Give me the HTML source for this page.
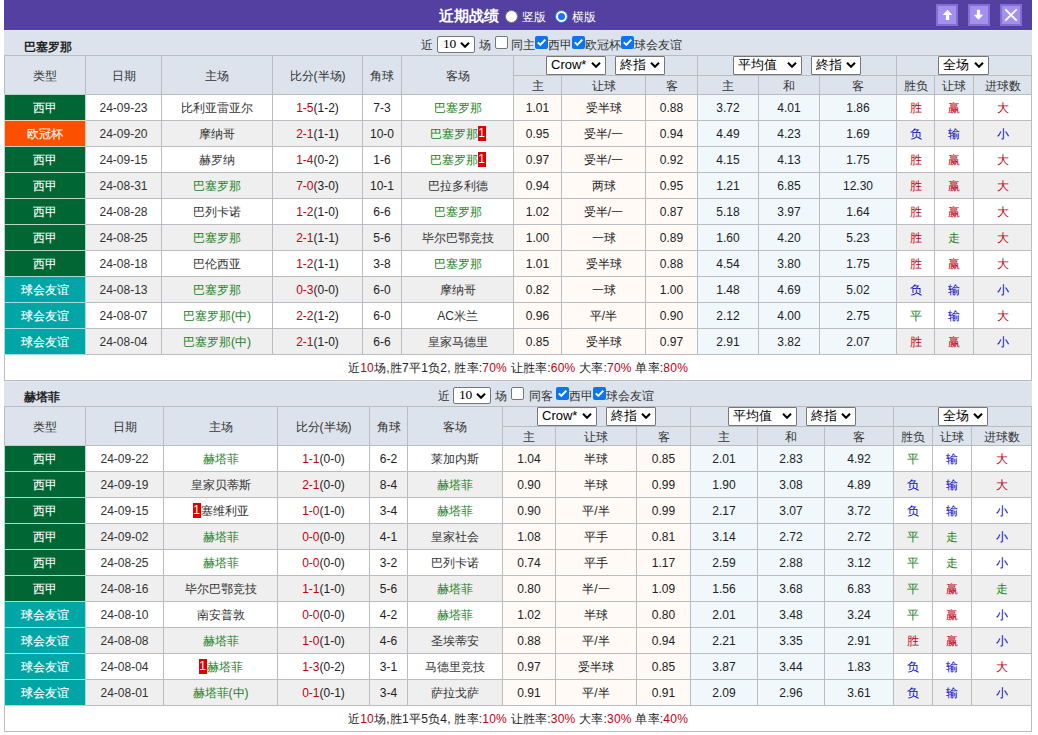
<!DOCTYPE html>
<html><head><meta charset="utf-8"><style>
*{box-sizing:border-box}
html,body{margin:0;padding:0;background:#fff;width:1038px;height:735px;overflow:hidden;font-family:"Liberation Sans", sans-serif;font-size:12px;color:#333}
.top{position:absolute;left:4px;top:0;width:1028px;height:30px;background:#5340a0}
.title{position:absolute;left:439px;top:7px;color:#fff;font-weight:bold;font-size:15px;line-height:18px;white-space:nowrap}
.radio{position:absolute;top:10px;width:13px;height:13px;border-radius:50%;background:#fff;border:1px solid #767676}
.radio.on{border:1px solid #1a73ff;background:#fff}
.radio.on:after{content:"";position:absolute;left:2px;top:2px;width:7px;height:7px;border-radius:50%;background:#1a73ff}
.rl{position:absolute;top:10px;color:#fff;font-size:12px;line-height:15px}
.btn{position:absolute;top:4px;width:22px;height:22px;background:#a291ee;border:2px solid #8170d0}
.bar{position:absolute;left:4px;width:1028px;background:#dce3ed;border-top:1px solid #e4e7f4}
.tname{position:absolute;left:24px;font-weight:bold;font-size:12px;line-height:14px;color:#222}
.grid{position:absolute;background:#b9bcc1}
.k{font-weight:normal}
.c{position:absolute;text-align:center;white-space:nowrap;overflow:hidden;color:#222}
.rc{display:inline-block;background:#e00000;color:#fff;width:8px;height:15px;line-height:15px;font-size:12px;text-align:center;vertical-align:1px;margin:0}
.sel{position:absolute;height:19px;background:#fff;border:1px solid #767676;border-radius:1px;font-size:13px;line-height:16px;color:#000}
.st{position:absolute;left:4px;top:0}
.chev{position:absolute;right:4px;top:5px}
.ft{position:absolute;white-space:nowrap;line-height:14px;font-size:12px;color:#333}
.fsel{position:absolute;background:#fff;border:1px solid #767676;border-radius:2px;color:#000}
.fst{position:absolute;left:6px;top:0px;font-family:"Liberation Serif",serif;font-size:13.5px;line-height:14px;left:5px;letter-spacing:-0.3px}
.ck{position:absolute;width:13px;height:13px;border:1px solid #767676;border-radius:2px;background:#fff}
.ck.on{background:#0a75ee;border:none;border-radius:2px}
.ck svg{position:absolute;left:0;top:0}
</style></head><body>
<div class="top"></div>
<div class="title">近期战绩</div>
<div class="radio" style="left:505px"></div><div class="rl" style="left:522px">竖版</div>
<div class="radio on" style="left:555px"></div><div class="rl" style="left:572px">横版</div>
<div class="btn" style="left:936px"><svg width="18" height="18" viewBox="0 0 18 18"><path d="M9.5 3.8 L14.3 9 L11.2 9 L11.2 14 L7.9 14 L7.9 9 L4.7 9 Z" fill="#fff"/></svg></div>
<div class="btn" style="left:968px"><svg width="18" height="18" viewBox="0 0 18 18"><path d="M8.5 13.8 L13.2 8.7 L10.1 8.7 L10.1 3.8 L6.9 3.8 L6.9 8.7 L3.8 8.7 Z" fill="#fff"/></svg></div>
<div class="btn" style="left:1000px"><svg width="18" height="18" viewBox="0 0 18 18"><path d="M3.3 3.3 L14.7 14.7 M14.7 3.3 L3.3 14.7" stroke="#fff" stroke-width="1.9"/></svg></div>
<div class="bar" style="top:30px;height:25px"></div>
<div class="tname" style="top:40px">巴塞罗那</div>
<div class="grid" style="left:4px;top:55px;width:1028px;height:326px"></div>
<div class="c" style="left:5px;top:56px;width:80px;height:38px;line-height:40px;background:#dce3ed;color:#333"><b class="k">类型</b></div>
<div class="c" style="left:86px;top:56px;width:75px;height:38px;line-height:40px;background:#dce3ed;color:#333"><b class="k">日期</b></div>
<div class="c" style="left:162px;top:56px;width:110px;height:38px;line-height:40px;background:#dce3ed;color:#333"><b class="k">主场</b></div>
<div class="c" style="left:273px;top:56px;width:89px;height:38px;line-height:40px;background:#dce3ed;color:#333"><b class="k">比分</b>(<b class="k">半场</b>)</div>
<div class="c" style="left:363px;top:56px;width:38px;height:38px;line-height:40px;background:#dce3ed;color:#333"><b class="k">角球</b></div>
<div class="c" style="left:402px;top:56px;width:111px;height:38px;line-height:40px;background:#dce3ed;color:#333"><b class="k">客场</b></div>
<div class="c" style="left:514px;top:56px;width:183px;height:19px;line-height:21px;background:#dce3ed;"></div>
<div class="c" style="left:698px;top:56px;width:198px;height:19px;line-height:21px;background:#dce3ed;"></div>
<div class="c" style="left:897px;top:56px;width:134px;height:19px;line-height:21px;background:#dce3ed;"></div>
<div class="c" style="left:514px;top:76px;width:47px;height:18px;line-height:20px;background:#dce3ed;color:#333;line-height:21px"><b class="k">主</b></div>
<div class="c" style="left:562px;top:76px;width:83px;height:18px;line-height:20px;background:#dce3ed;color:#333;line-height:21px"><b class="k">让球</b></div>
<div class="c" style="left:646px;top:76px;width:51px;height:18px;line-height:20px;background:#dce3ed;color:#333;line-height:21px"><b class="k">客</b></div>
<div class="c" style="left:698px;top:76px;width:60px;height:18px;line-height:20px;background:#dce3ed;color:#333;line-height:21px"><b class="k">主</b></div>
<div class="c" style="left:759px;top:76px;width:60px;height:18px;line-height:20px;background:#dce3ed;color:#333;line-height:21px"><b class="k">和</b></div>
<div class="c" style="left:820px;top:76px;width:76px;height:18px;line-height:20px;background:#dce3ed;color:#333;line-height:21px"><b class="k">客</b></div>
<div class="c" style="left:897px;top:76px;width:37px;height:18px;line-height:20px;background:#dce3ed;color:#333;line-height:21px"><b class="k">胜负</b></div>
<div class="c" style="left:935px;top:76px;width:38px;height:18px;line-height:20px;background:#dce3ed;color:#333;line-height:21px"><b class="k">让球</b></div>
<div class="c" style="left:974px;top:76px;width:57px;height:18px;line-height:20px;background:#dce3ed;color:#333;line-height:21px"><b class="k">进球数</b></div>
<div class="c" style="left:4px;top:94px;width:82px;height:27px;background:#b8d4c6"></div>
<div class="c" style="left:5px;top:95px;width:80px;height:25px;line-height:27px;background:#006633;color:#fff;-webkit-text-stroke:0.1px #fff"><b class="k">西甲</b></div>
<div class="c" style="left:86px;top:95px;width:75px;height:25px;line-height:27px;background:#ffffff;color:#333">24-09-23</div>
<div class="c" style="left:162px;top:95px;width:110px;height:25px;line-height:27px;background:#ffffff;"><span style="color:#333333"><b class="k">比利亚雷亚尔</b></span></div>
<div class="c" style="left:273px;top:95px;width:89px;height:25px;line-height:27px;background:#ffffff;"><span style="color:#c00012">1-5</span>(1-2)</div>
<div class="c" style="left:363px;top:95px;width:38px;height:25px;line-height:27px;background:#ffffff;">7-3</div>
<div class="c" style="left:402px;top:95px;width:111px;height:25px;line-height:27px;background:#ffffff;"><span style="color:#1a801a"><b class="k">巴塞罗那</b></span></div>
<div class="c" style="left:514px;top:95px;width:47px;height:25px;line-height:27px;background:#fffaf6;">1.01</div>
<div class="c" style="left:562px;top:95px;width:83px;height:25px;line-height:27px;background:#fffaf6;"><b class="k">受半球</b></div>
<div class="c" style="left:646px;top:95px;width:51px;height:25px;line-height:27px;background:#fffaf6;">0.88</div>
<div class="c" style="left:698px;top:95px;width:60px;height:25px;line-height:27px;background:#f0f8fc;">3.72</div>
<div class="c" style="left:759px;top:95px;width:60px;height:25px;line-height:27px;background:#f0f8fc;">4.01</div>
<div class="c" style="left:820px;top:95px;width:76px;height:25px;line-height:27px;background:#f0f8fc;">1.86</div>
<div class="c" style="left:897px;top:95px;width:37px;height:25px;line-height:27px;background:#ffffff;"><span style="color:#c00012"><b class="k">胜</b></span></div>
<div class="c" style="left:935px;top:95px;width:38px;height:25px;line-height:27px;background:#ffffff;"><span style="color:#c00012"><b class="k">赢</b></span></div>
<div class="c" style="left:974px;top:95px;width:57px;height:25px;line-height:27px;background:#ffffff;"><span style="color:#c00012"><b class="k">大</b></span></div>
<div class="c" style="left:4px;top:120px;width:82px;height:27px;background:#f5d0b0"></div>
<div class="c" style="left:5px;top:121px;width:80px;height:25px;line-height:27px;background:#fa5000;color:#fff;-webkit-text-stroke:0.1px #fff"><b class="k">欧冠杯</b></div>
<div class="c" style="left:86px;top:121px;width:75px;height:25px;line-height:27px;background:#efefef;color:#333">24-09-20</div>
<div class="c" style="left:162px;top:121px;width:110px;height:25px;line-height:27px;background:#efefef;"><span style="color:#333333"><b class="k">摩纳哥</b></span></div>
<div class="c" style="left:273px;top:121px;width:89px;height:25px;line-height:27px;background:#efefef;"><span style="color:#c00012">2-1</span>(1-1)</div>
<div class="c" style="left:363px;top:121px;width:38px;height:25px;line-height:27px;background:#efefef;">10-0</div>
<div class="c" style="left:402px;top:121px;width:111px;height:25px;line-height:27px;background:#efefef;"><span style="color:#1a801a"><b class="k">巴塞罗那</b><span class="rc">1</span></span></div>
<div class="c" style="left:514px;top:121px;width:47px;height:25px;line-height:27px;background:#fffaf6;">0.95</div>
<div class="c" style="left:562px;top:121px;width:83px;height:25px;line-height:27px;background:#fffaf6;"><b class="k">受半</b>/<b class="k">一</b></div>
<div class="c" style="left:646px;top:121px;width:51px;height:25px;line-height:27px;background:#fffaf6;">0.94</div>
<div class="c" style="left:698px;top:121px;width:60px;height:25px;line-height:27px;background:#f0f8fc;">4.49</div>
<div class="c" style="left:759px;top:121px;width:60px;height:25px;line-height:27px;background:#f0f8fc;">4.23</div>
<div class="c" style="left:820px;top:121px;width:76px;height:25px;line-height:27px;background:#f0f8fc;">1.69</div>
<div class="c" style="left:897px;top:121px;width:37px;height:25px;line-height:27px;background:#efefef;"><span style="color:#0000c8"><b class="k">负</b></span></div>
<div class="c" style="left:935px;top:121px;width:38px;height:25px;line-height:27px;background:#efefef;"><span style="color:#0000c8"><b class="k">输</b></span></div>
<div class="c" style="left:974px;top:121px;width:57px;height:25px;line-height:27px;background:#efefef;"><span style="color:#0000c8"><b class="k">小</b></span></div>
<div class="c" style="left:4px;top:146px;width:82px;height:27px;background:#b8d4c6"></div>
<div class="c" style="left:5px;top:147px;width:80px;height:25px;line-height:27px;background:#006633;color:#fff;-webkit-text-stroke:0.1px #fff"><b class="k">西甲</b></div>
<div class="c" style="left:86px;top:147px;width:75px;height:25px;line-height:27px;background:#ffffff;color:#333">24-09-15</div>
<div class="c" style="left:162px;top:147px;width:110px;height:25px;line-height:27px;background:#ffffff;"><span style="color:#333333"><b class="k">赫罗纳</b></span></div>
<div class="c" style="left:273px;top:147px;width:89px;height:25px;line-height:27px;background:#ffffff;"><span style="color:#c00012">1-4</span>(0-2)</div>
<div class="c" style="left:363px;top:147px;width:38px;height:25px;line-height:27px;background:#ffffff;">1-6</div>
<div class="c" style="left:402px;top:147px;width:111px;height:25px;line-height:27px;background:#ffffff;"><span style="color:#1a801a"><b class="k">巴塞罗那</b><span class="rc">1</span></span></div>
<div class="c" style="left:514px;top:147px;width:47px;height:25px;line-height:27px;background:#fffaf6;">0.97</div>
<div class="c" style="left:562px;top:147px;width:83px;height:25px;line-height:27px;background:#fffaf6;"><b class="k">受半</b>/<b class="k">一</b></div>
<div class="c" style="left:646px;top:147px;width:51px;height:25px;line-height:27px;background:#fffaf6;">0.92</div>
<div class="c" style="left:698px;top:147px;width:60px;height:25px;line-height:27px;background:#f0f8fc;">4.15</div>
<div class="c" style="left:759px;top:147px;width:60px;height:25px;line-height:27px;background:#f0f8fc;">4.13</div>
<div class="c" style="left:820px;top:147px;width:76px;height:25px;line-height:27px;background:#f0f8fc;">1.75</div>
<div class="c" style="left:897px;top:147px;width:37px;height:25px;line-height:27px;background:#ffffff;"><span style="color:#c00012"><b class="k">胜</b></span></div>
<div class="c" style="left:935px;top:147px;width:38px;height:25px;line-height:27px;background:#ffffff;"><span style="color:#c00012"><b class="k">赢</b></span></div>
<div class="c" style="left:974px;top:147px;width:57px;height:25px;line-height:27px;background:#ffffff;"><span style="color:#c00012"><b class="k">大</b></span></div>
<div class="c" style="left:4px;top:172px;width:82px;height:27px;background:#b8d4c6"></div>
<div class="c" style="left:5px;top:173px;width:80px;height:25px;line-height:27px;background:#006633;color:#fff;-webkit-text-stroke:0.1px #fff"><b class="k">西甲</b></div>
<div class="c" style="left:86px;top:173px;width:75px;height:25px;line-height:27px;background:#efefef;color:#333">24-08-31</div>
<div class="c" style="left:162px;top:173px;width:110px;height:25px;line-height:27px;background:#efefef;"><span style="color:#1a801a"><b class="k">巴塞罗那</b></span></div>
<div class="c" style="left:273px;top:173px;width:89px;height:25px;line-height:27px;background:#efefef;"><span style="color:#c00012">7-0</span>(3-0)</div>
<div class="c" style="left:363px;top:173px;width:38px;height:25px;line-height:27px;background:#efefef;">10-1</div>
<div class="c" style="left:402px;top:173px;width:111px;height:25px;line-height:27px;background:#efefef;"><span style="color:#333333"><b class="k">巴拉多利德</b></span></div>
<div class="c" style="left:514px;top:173px;width:47px;height:25px;line-height:27px;background:#fffaf6;">0.94</div>
<div class="c" style="left:562px;top:173px;width:83px;height:25px;line-height:27px;background:#fffaf6;"><b class="k">两球</b></div>
<div class="c" style="left:646px;top:173px;width:51px;height:25px;line-height:27px;background:#fffaf6;">0.95</div>
<div class="c" style="left:698px;top:173px;width:60px;height:25px;line-height:27px;background:#f0f8fc;">1.21</div>
<div class="c" style="left:759px;top:173px;width:60px;height:25px;line-height:27px;background:#f0f8fc;">6.85</div>
<div class="c" style="left:820px;top:173px;width:76px;height:25px;line-height:27px;background:#f0f8fc;">12.30</div>
<div class="c" style="left:897px;top:173px;width:37px;height:25px;line-height:27px;background:#efefef;"><span style="color:#c00012"><b class="k">胜</b></span></div>
<div class="c" style="left:935px;top:173px;width:38px;height:25px;line-height:27px;background:#efefef;"><span style="color:#c00012"><b class="k">赢</b></span></div>
<div class="c" style="left:974px;top:173px;width:57px;height:25px;line-height:27px;background:#efefef;"><span style="color:#c00012"><b class="k">大</b></span></div>
<div class="c" style="left:4px;top:198px;width:82px;height:27px;background:#b8d4c6"></div>
<div class="c" style="left:5px;top:199px;width:80px;height:25px;line-height:27px;background:#006633;color:#fff;-webkit-text-stroke:0.1px #fff"><b class="k">西甲</b></div>
<div class="c" style="left:86px;top:199px;width:75px;height:25px;line-height:27px;background:#ffffff;color:#333">24-08-28</div>
<div class="c" style="left:162px;top:199px;width:110px;height:25px;line-height:27px;background:#ffffff;"><span style="color:#333333"><b class="k">巴列卡诺</b></span></div>
<div class="c" style="left:273px;top:199px;width:89px;height:25px;line-height:27px;background:#ffffff;"><span style="color:#c00012">1-2</span>(1-0)</div>
<div class="c" style="left:363px;top:199px;width:38px;height:25px;line-height:27px;background:#ffffff;">6-6</div>
<div class="c" style="left:402px;top:199px;width:111px;height:25px;line-height:27px;background:#ffffff;"><span style="color:#1a801a"><b class="k">巴塞罗那</b></span></div>
<div class="c" style="left:514px;top:199px;width:47px;height:25px;line-height:27px;background:#fffaf6;">1.02</div>
<div class="c" style="left:562px;top:199px;width:83px;height:25px;line-height:27px;background:#fffaf6;"><b class="k">受半</b>/<b class="k">一</b></div>
<div class="c" style="left:646px;top:199px;width:51px;height:25px;line-height:27px;background:#fffaf6;">0.87</div>
<div class="c" style="left:698px;top:199px;width:60px;height:25px;line-height:27px;background:#f0f8fc;">5.18</div>
<div class="c" style="left:759px;top:199px;width:60px;height:25px;line-height:27px;background:#f0f8fc;">3.97</div>
<div class="c" style="left:820px;top:199px;width:76px;height:25px;line-height:27px;background:#f0f8fc;">1.64</div>
<div class="c" style="left:897px;top:199px;width:37px;height:25px;line-height:27px;background:#ffffff;"><span style="color:#c00012"><b class="k">胜</b></span></div>
<div class="c" style="left:935px;top:199px;width:38px;height:25px;line-height:27px;background:#ffffff;"><span style="color:#c00012"><b class="k">赢</b></span></div>
<div class="c" style="left:974px;top:199px;width:57px;height:25px;line-height:27px;background:#ffffff;"><span style="color:#c00012"><b class="k">大</b></span></div>
<div class="c" style="left:4px;top:224px;width:82px;height:27px;background:#b8d4c6"></div>
<div class="c" style="left:5px;top:225px;width:80px;height:25px;line-height:27px;background:#006633;color:#fff;-webkit-text-stroke:0.1px #fff"><b class="k">西甲</b></div>
<div class="c" style="left:86px;top:225px;width:75px;height:25px;line-height:27px;background:#efefef;color:#333">24-08-25</div>
<div class="c" style="left:162px;top:225px;width:110px;height:25px;line-height:27px;background:#efefef;"><span style="color:#1a801a"><b class="k">巴塞罗那</b></span></div>
<div class="c" style="left:273px;top:225px;width:89px;height:25px;line-height:27px;background:#efefef;"><span style="color:#c00012">2-1</span>(1-1)</div>
<div class="c" style="left:363px;top:225px;width:38px;height:25px;line-height:27px;background:#efefef;">5-6</div>
<div class="c" style="left:402px;top:225px;width:111px;height:25px;line-height:27px;background:#efefef;"><span style="color:#333333"><b class="k">毕尔巴鄂竞技</b></span></div>
<div class="c" style="left:514px;top:225px;width:47px;height:25px;line-height:27px;background:#fffaf6;">1.00</div>
<div class="c" style="left:562px;top:225px;width:83px;height:25px;line-height:27px;background:#fffaf6;"><b class="k">一球</b></div>
<div class="c" style="left:646px;top:225px;width:51px;height:25px;line-height:27px;background:#fffaf6;">0.89</div>
<div class="c" style="left:698px;top:225px;width:60px;height:25px;line-height:27px;background:#f0f8fc;">1.60</div>
<div class="c" style="left:759px;top:225px;width:60px;height:25px;line-height:27px;background:#f0f8fc;">4.20</div>
<div class="c" style="left:820px;top:225px;width:76px;height:25px;line-height:27px;background:#f0f8fc;">5.23</div>
<div class="c" style="left:897px;top:225px;width:37px;height:25px;line-height:27px;background:#efefef;"><span style="color:#c00012"><b class="k">胜</b></span></div>
<div class="c" style="left:935px;top:225px;width:38px;height:25px;line-height:27px;background:#efefef;"><span style="color:#1a801a"><b class="k">走</b></span></div>
<div class="c" style="left:974px;top:225px;width:57px;height:25px;line-height:27px;background:#efefef;"><span style="color:#c00012"><b class="k">大</b></span></div>
<div class="c" style="left:4px;top:250px;width:82px;height:27px;background:#b8d4c6"></div>
<div class="c" style="left:5px;top:251px;width:80px;height:25px;line-height:27px;background:#006633;color:#fff;-webkit-text-stroke:0.1px #fff"><b class="k">西甲</b></div>
<div class="c" style="left:86px;top:251px;width:75px;height:25px;line-height:27px;background:#ffffff;color:#333">24-08-18</div>
<div class="c" style="left:162px;top:251px;width:110px;height:25px;line-height:27px;background:#ffffff;"><span style="color:#333333"><b class="k">巴伦西亚</b></span></div>
<div class="c" style="left:273px;top:251px;width:89px;height:25px;line-height:27px;background:#ffffff;"><span style="color:#c00012">1-2</span>(1-1)</div>
<div class="c" style="left:363px;top:251px;width:38px;height:25px;line-height:27px;background:#ffffff;">3-8</div>
<div class="c" style="left:402px;top:251px;width:111px;height:25px;line-height:27px;background:#ffffff;"><span style="color:#1a801a"><b class="k">巴塞罗那</b></span></div>
<div class="c" style="left:514px;top:251px;width:47px;height:25px;line-height:27px;background:#fffaf6;">1.01</div>
<div class="c" style="left:562px;top:251px;width:83px;height:25px;line-height:27px;background:#fffaf6;"><b class="k">受半球</b></div>
<div class="c" style="left:646px;top:251px;width:51px;height:25px;line-height:27px;background:#fffaf6;">0.88</div>
<div class="c" style="left:698px;top:251px;width:60px;height:25px;line-height:27px;background:#f0f8fc;">4.54</div>
<div class="c" style="left:759px;top:251px;width:60px;height:25px;line-height:27px;background:#f0f8fc;">3.80</div>
<div class="c" style="left:820px;top:251px;width:76px;height:25px;line-height:27px;background:#f0f8fc;">1.75</div>
<div class="c" style="left:897px;top:251px;width:37px;height:25px;line-height:27px;background:#ffffff;"><span style="color:#c00012"><b class="k">胜</b></span></div>
<div class="c" style="left:935px;top:251px;width:38px;height:25px;line-height:27px;background:#ffffff;"><span style="color:#c00012"><b class="k">赢</b></span></div>
<div class="c" style="left:974px;top:251px;width:57px;height:25px;line-height:27px;background:#ffffff;"><span style="color:#c00012"><b class="k">大</b></span></div>
<div class="c" style="left:4px;top:276px;width:82px;height:27px;background:#a8dcdc"></div>
<div class="c" style="left:5px;top:277px;width:80px;height:25px;line-height:27px;background:#00a6a6;color:#fff;-webkit-text-stroke:0.1px #fff"><b class="k">球会友谊</b></div>
<div class="c" style="left:86px;top:277px;width:75px;height:25px;line-height:27px;background:#efefef;color:#333">24-08-13</div>
<div class="c" style="left:162px;top:277px;width:110px;height:25px;line-height:27px;background:#efefef;"><span style="color:#1a801a"><b class="k">巴塞罗那</b></span></div>
<div class="c" style="left:273px;top:277px;width:89px;height:25px;line-height:27px;background:#efefef;"><span style="color:#c00012">0-3</span>(0-0)</div>
<div class="c" style="left:363px;top:277px;width:38px;height:25px;line-height:27px;background:#efefef;">6-0</div>
<div class="c" style="left:402px;top:277px;width:111px;height:25px;line-height:27px;background:#efefef;"><span style="color:#333333"><b class="k">摩纳哥</b></span></div>
<div class="c" style="left:514px;top:277px;width:47px;height:25px;line-height:27px;background:#fffaf6;">0.82</div>
<div class="c" style="left:562px;top:277px;width:83px;height:25px;line-height:27px;background:#fffaf6;"><b class="k">一球</b></div>
<div class="c" style="left:646px;top:277px;width:51px;height:25px;line-height:27px;background:#fffaf6;">1.00</div>
<div class="c" style="left:698px;top:277px;width:60px;height:25px;line-height:27px;background:#f0f8fc;">1.48</div>
<div class="c" style="left:759px;top:277px;width:60px;height:25px;line-height:27px;background:#f0f8fc;">4.69</div>
<div class="c" style="left:820px;top:277px;width:76px;height:25px;line-height:27px;background:#f0f8fc;">5.02</div>
<div class="c" style="left:897px;top:277px;width:37px;height:25px;line-height:27px;background:#efefef;"><span style="color:#0000c8"><b class="k">负</b></span></div>
<div class="c" style="left:935px;top:277px;width:38px;height:25px;line-height:27px;background:#efefef;"><span style="color:#0000c8"><b class="k">输</b></span></div>
<div class="c" style="left:974px;top:277px;width:57px;height:25px;line-height:27px;background:#efefef;"><span style="color:#0000c8"><b class="k">小</b></span></div>
<div class="c" style="left:4px;top:302px;width:82px;height:27px;background:#a8dcdc"></div>
<div class="c" style="left:5px;top:303px;width:80px;height:25px;line-height:27px;background:#00a6a6;color:#fff;-webkit-text-stroke:0.1px #fff"><b class="k">球会友谊</b></div>
<div class="c" style="left:86px;top:303px;width:75px;height:25px;line-height:27px;background:#ffffff;color:#333">24-08-07</div>
<div class="c" style="left:162px;top:303px;width:110px;height:25px;line-height:27px;background:#ffffff;"><span style="color:#1a801a"><b class="k">巴塞罗那</b>(<b class="k">中</b>)</span></div>
<div class="c" style="left:273px;top:303px;width:89px;height:25px;line-height:27px;background:#ffffff;"><span style="color:#c00012">2-2</span>(1-2)</div>
<div class="c" style="left:363px;top:303px;width:38px;height:25px;line-height:27px;background:#ffffff;">6-0</div>
<div class="c" style="left:402px;top:303px;width:111px;height:25px;line-height:27px;background:#ffffff;"><span style="color:#333333">AC<b class="k">米兰</b></span></div>
<div class="c" style="left:514px;top:303px;width:47px;height:25px;line-height:27px;background:#fffaf6;">0.96</div>
<div class="c" style="left:562px;top:303px;width:83px;height:25px;line-height:27px;background:#fffaf6;"><b class="k">平</b>/<b class="k">半</b></div>
<div class="c" style="left:646px;top:303px;width:51px;height:25px;line-height:27px;background:#fffaf6;">0.90</div>
<div class="c" style="left:698px;top:303px;width:60px;height:25px;line-height:27px;background:#f0f8fc;">2.12</div>
<div class="c" style="left:759px;top:303px;width:60px;height:25px;line-height:27px;background:#f0f8fc;">4.00</div>
<div class="c" style="left:820px;top:303px;width:76px;height:25px;line-height:27px;background:#f0f8fc;">2.75</div>
<div class="c" style="left:897px;top:303px;width:37px;height:25px;line-height:27px;background:#ffffff;"><span style="color:#1a801a"><b class="k">平</b></span></div>
<div class="c" style="left:935px;top:303px;width:38px;height:25px;line-height:27px;background:#ffffff;"><span style="color:#0000c8"><b class="k">输</b></span></div>
<div class="c" style="left:974px;top:303px;width:57px;height:25px;line-height:27px;background:#ffffff;"><span style="color:#c00012"><b class="k">大</b></span></div>
<div class="c" style="left:4px;top:328px;width:82px;height:27px;background:#a8dcdc"></div>
<div class="c" style="left:5px;top:329px;width:80px;height:25px;line-height:27px;background:#00a6a6;color:#fff;-webkit-text-stroke:0.1px #fff"><b class="k">球会友谊</b></div>
<div class="c" style="left:86px;top:329px;width:75px;height:25px;line-height:27px;background:#efefef;color:#333">24-08-04</div>
<div class="c" style="left:162px;top:329px;width:110px;height:25px;line-height:27px;background:#efefef;"><span style="color:#1a801a"><b class="k">巴塞罗那</b>(<b class="k">中</b>)</span></div>
<div class="c" style="left:273px;top:329px;width:89px;height:25px;line-height:27px;background:#efefef;"><span style="color:#c00012">2-1</span>(1-0)</div>
<div class="c" style="left:363px;top:329px;width:38px;height:25px;line-height:27px;background:#efefef;">6-6</div>
<div class="c" style="left:402px;top:329px;width:111px;height:25px;line-height:27px;background:#efefef;"><span style="color:#333333"><b class="k">皇家马德里</b></span></div>
<div class="c" style="left:514px;top:329px;width:47px;height:25px;line-height:27px;background:#fffaf6;">0.85</div>
<div class="c" style="left:562px;top:329px;width:83px;height:25px;line-height:27px;background:#fffaf6;"><b class="k">受半球</b></div>
<div class="c" style="left:646px;top:329px;width:51px;height:25px;line-height:27px;background:#fffaf6;">0.97</div>
<div class="c" style="left:698px;top:329px;width:60px;height:25px;line-height:27px;background:#f0f8fc;">2.91</div>
<div class="c" style="left:759px;top:329px;width:60px;height:25px;line-height:27px;background:#f0f8fc;">3.82</div>
<div class="c" style="left:820px;top:329px;width:76px;height:25px;line-height:27px;background:#f0f8fc;">2.07</div>
<div class="c" style="left:897px;top:329px;width:37px;height:25px;line-height:27px;background:#efefef;"><span style="color:#c00012"><b class="k">胜</b></span></div>
<div class="c" style="left:935px;top:329px;width:38px;height:25px;line-height:27px;background:#efefef;"><span style="color:#c00012"><b class="k">赢</b></span></div>
<div class="c" style="left:974px;top:329px;width:57px;height:25px;line-height:27px;background:#efefef;"><span style="color:#0000c8"><b class="k">小</b></span></div>
<div class="c" style="left:5px;top:355px;width:1026px;height:25px;line-height:27px;background:#fff;letter-spacing:0.22px"><b class="k">近</b><span style="color:#c00012">10</span><b class="k">场</b>,<b class="k">胜</b>7<b class="k">平</b>1<b class="k">负</b>2, <b class="k">胜率</b>:<span style="color:#c00012">70%</span> <b class="k">让胜率</b>:<span style="color:#c00012">60%</span> <b class="k">大率</b>:<span style="color:#c00012">70%</span> <b class="k">单率</b>:<span style="color:#c00012">80%</span></div>
<div class="bar" style="top:381px;height:25px"></div>
<div class="tname" style="top:390px">赫塔菲</div>
<div class="grid" style="left:4px;top:406px;width:1028px;height:326px"></div>
<div class="c" style="left:5px;top:407px;width:80px;height:38px;line-height:40px;background:#dce3ed;color:#333"><b class="k">类型</b></div>
<div class="c" style="left:86px;top:407px;width:77px;height:38px;line-height:40px;background:#dce3ed;color:#333"><b class="k">日期</b></div>
<div class="c" style="left:164px;top:407px;width:113px;height:38px;line-height:40px;background:#dce3ed;color:#333"><b class="k">主场</b></div>
<div class="c" style="left:278px;top:407px;width:91px;height:38px;line-height:40px;background:#dce3ed;color:#333"><b class="k">比分</b>(<b class="k">半场</b>)</div>
<div class="c" style="left:370px;top:407px;width:37px;height:38px;line-height:40px;background:#dce3ed;color:#333"><b class="k">角球</b></div>
<div class="c" style="left:408px;top:407px;width:94px;height:38px;line-height:40px;background:#dce3ed;color:#333"><b class="k">客场</b></div>
<div class="c" style="left:503px;top:407px;width:187px;height:19px;line-height:21px;background:#dce3ed;"></div>
<div class="c" style="left:691px;top:407px;width:202px;height:19px;line-height:21px;background:#dce3ed;"></div>
<div class="c" style="left:894px;top:407px;width:137px;height:19px;line-height:21px;background:#dce3ed;"></div>
<div class="c" style="left:503px;top:427px;width:52px;height:18px;line-height:20px;background:#dce3ed;color:#333;line-height:21px"><b class="k">主</b></div>
<div class="c" style="left:556px;top:427px;width:80px;height:18px;line-height:20px;background:#dce3ed;color:#333;line-height:21px"><b class="k">让球</b></div>
<div class="c" style="left:637px;top:427px;width:53px;height:18px;line-height:20px;background:#dce3ed;color:#333;line-height:21px"><b class="k">客</b></div>
<div class="c" style="left:691px;top:427px;width:66px;height:18px;line-height:20px;background:#dce3ed;color:#333;line-height:21px"><b class="k">主</b></div>
<div class="c" style="left:758px;top:427px;width:66px;height:18px;line-height:20px;background:#dce3ed;color:#333;line-height:21px"><b class="k">和</b></div>
<div class="c" style="left:825px;top:427px;width:68px;height:18px;line-height:20px;background:#dce3ed;color:#333;line-height:21px"><b class="k">客</b></div>
<div class="c" style="left:894px;top:427px;width:38px;height:18px;line-height:20px;background:#dce3ed;color:#333;line-height:21px"><b class="k">胜负</b></div>
<div class="c" style="left:933px;top:427px;width:38px;height:18px;line-height:20px;background:#dce3ed;color:#333;line-height:21px"><b class="k">让球</b></div>
<div class="c" style="left:972px;top:427px;width:59px;height:18px;line-height:20px;background:#dce3ed;color:#333;line-height:21px"><b class="k">进球数</b></div>
<div class="c" style="left:4px;top:445px;width:82px;height:27px;background:#b8d4c6"></div>
<div class="c" style="left:5px;top:446px;width:80px;height:25px;line-height:27px;background:#006633;color:#fff;-webkit-text-stroke:0.1px #fff"><b class="k">西甲</b></div>
<div class="c" style="left:86px;top:446px;width:77px;height:25px;line-height:27px;background:#ffffff;color:#333">24-09-22</div>
<div class="c" style="left:164px;top:446px;width:113px;height:25px;line-height:27px;background:#ffffff;"><span style="color:#1a801a"><b class="k">赫塔菲</b></span></div>
<div class="c" style="left:278px;top:446px;width:91px;height:25px;line-height:27px;background:#ffffff;"><span style="color:#c00012">1-1</span>(0-0)</div>
<div class="c" style="left:370px;top:446px;width:37px;height:25px;line-height:27px;background:#ffffff;">6-2</div>
<div class="c" style="left:408px;top:446px;width:94px;height:25px;line-height:27px;background:#ffffff;"><span style="color:#333333"><b class="k">莱加内斯</b></span></div>
<div class="c" style="left:503px;top:446px;width:52px;height:25px;line-height:27px;background:#fffaf6;">1.04</div>
<div class="c" style="left:556px;top:446px;width:80px;height:25px;line-height:27px;background:#fffaf6;"><b class="k">半球</b></div>
<div class="c" style="left:637px;top:446px;width:53px;height:25px;line-height:27px;background:#fffaf6;">0.85</div>
<div class="c" style="left:691px;top:446px;width:66px;height:25px;line-height:27px;background:#f0f8fc;">2.01</div>
<div class="c" style="left:758px;top:446px;width:66px;height:25px;line-height:27px;background:#f0f8fc;">2.83</div>
<div class="c" style="left:825px;top:446px;width:68px;height:25px;line-height:27px;background:#f0f8fc;">4.92</div>
<div class="c" style="left:894px;top:446px;width:38px;height:25px;line-height:27px;background:#ffffff;"><span style="color:#1a801a"><b class="k">平</b></span></div>
<div class="c" style="left:933px;top:446px;width:38px;height:25px;line-height:27px;background:#ffffff;"><span style="color:#0000c8"><b class="k">输</b></span></div>
<div class="c" style="left:972px;top:446px;width:59px;height:25px;line-height:27px;background:#ffffff;"><span style="color:#c00012"><b class="k">大</b></span></div>
<div class="c" style="left:4px;top:471px;width:82px;height:27px;background:#b8d4c6"></div>
<div class="c" style="left:5px;top:472px;width:80px;height:25px;line-height:27px;background:#006633;color:#fff;-webkit-text-stroke:0.1px #fff"><b class="k">西甲</b></div>
<div class="c" style="left:86px;top:472px;width:77px;height:25px;line-height:27px;background:#efefef;color:#333">24-09-19</div>
<div class="c" style="left:164px;top:472px;width:113px;height:25px;line-height:27px;background:#efefef;"><span style="color:#333333"><b class="k">皇家贝蒂斯</b></span></div>
<div class="c" style="left:278px;top:472px;width:91px;height:25px;line-height:27px;background:#efefef;"><span style="color:#c00012">2-1</span>(0-0)</div>
<div class="c" style="left:370px;top:472px;width:37px;height:25px;line-height:27px;background:#efefef;">8-4</div>
<div class="c" style="left:408px;top:472px;width:94px;height:25px;line-height:27px;background:#efefef;"><span style="color:#1a801a"><b class="k">赫塔菲</b></span></div>
<div class="c" style="left:503px;top:472px;width:52px;height:25px;line-height:27px;background:#fffaf6;">0.90</div>
<div class="c" style="left:556px;top:472px;width:80px;height:25px;line-height:27px;background:#fffaf6;"><b class="k">半球</b></div>
<div class="c" style="left:637px;top:472px;width:53px;height:25px;line-height:27px;background:#fffaf6;">0.99</div>
<div class="c" style="left:691px;top:472px;width:66px;height:25px;line-height:27px;background:#f0f8fc;">1.90</div>
<div class="c" style="left:758px;top:472px;width:66px;height:25px;line-height:27px;background:#f0f8fc;">3.08</div>
<div class="c" style="left:825px;top:472px;width:68px;height:25px;line-height:27px;background:#f0f8fc;">4.89</div>
<div class="c" style="left:894px;top:472px;width:38px;height:25px;line-height:27px;background:#efefef;"><span style="color:#0000c8"><b class="k">负</b></span></div>
<div class="c" style="left:933px;top:472px;width:38px;height:25px;line-height:27px;background:#efefef;"><span style="color:#0000c8"><b class="k">输</b></span></div>
<div class="c" style="left:972px;top:472px;width:59px;height:25px;line-height:27px;background:#efefef;"><span style="color:#c00012"><b class="k">大</b></span></div>
<div class="c" style="left:4px;top:497px;width:82px;height:27px;background:#b8d4c6"></div>
<div class="c" style="left:5px;top:498px;width:80px;height:25px;line-height:27px;background:#006633;color:#fff;-webkit-text-stroke:0.1px #fff"><b class="k">西甲</b></div>
<div class="c" style="left:86px;top:498px;width:77px;height:25px;line-height:27px;background:#ffffff;color:#333">24-09-15</div>
<div class="c" style="left:164px;top:498px;width:113px;height:25px;line-height:27px;background:#ffffff;"><span style="color:#333333"><span class="rc">1</span><b class="k">塞维利亚</b></span></div>
<div class="c" style="left:278px;top:498px;width:91px;height:25px;line-height:27px;background:#ffffff;"><span style="color:#c00012">1-0</span>(1-0)</div>
<div class="c" style="left:370px;top:498px;width:37px;height:25px;line-height:27px;background:#ffffff;">3-4</div>
<div class="c" style="left:408px;top:498px;width:94px;height:25px;line-height:27px;background:#ffffff;"><span style="color:#1a801a"><b class="k">赫塔菲</b></span></div>
<div class="c" style="left:503px;top:498px;width:52px;height:25px;line-height:27px;background:#fffaf6;">0.90</div>
<div class="c" style="left:556px;top:498px;width:80px;height:25px;line-height:27px;background:#fffaf6;"><b class="k">平</b>/<b class="k">半</b></div>
<div class="c" style="left:637px;top:498px;width:53px;height:25px;line-height:27px;background:#fffaf6;">0.99</div>
<div class="c" style="left:691px;top:498px;width:66px;height:25px;line-height:27px;background:#f0f8fc;">2.17</div>
<div class="c" style="left:758px;top:498px;width:66px;height:25px;line-height:27px;background:#f0f8fc;">3.07</div>
<div class="c" style="left:825px;top:498px;width:68px;height:25px;line-height:27px;background:#f0f8fc;">3.72</div>
<div class="c" style="left:894px;top:498px;width:38px;height:25px;line-height:27px;background:#ffffff;"><span style="color:#0000c8"><b class="k">负</b></span></div>
<div class="c" style="left:933px;top:498px;width:38px;height:25px;line-height:27px;background:#ffffff;"><span style="color:#0000c8"><b class="k">输</b></span></div>
<div class="c" style="left:972px;top:498px;width:59px;height:25px;line-height:27px;background:#ffffff;"><span style="color:#0000c8"><b class="k">小</b></span></div>
<div class="c" style="left:4px;top:523px;width:82px;height:27px;background:#b8d4c6"></div>
<div class="c" style="left:5px;top:524px;width:80px;height:25px;line-height:27px;background:#006633;color:#fff;-webkit-text-stroke:0.1px #fff"><b class="k">西甲</b></div>
<div class="c" style="left:86px;top:524px;width:77px;height:25px;line-height:27px;background:#efefef;color:#333">24-09-02</div>
<div class="c" style="left:164px;top:524px;width:113px;height:25px;line-height:27px;background:#efefef;"><span style="color:#1a801a"><b class="k">赫塔菲</b></span></div>
<div class="c" style="left:278px;top:524px;width:91px;height:25px;line-height:27px;background:#efefef;"><span style="color:#c00012">0-0</span>(0-0)</div>
<div class="c" style="left:370px;top:524px;width:37px;height:25px;line-height:27px;background:#efefef;">4-1</div>
<div class="c" style="left:408px;top:524px;width:94px;height:25px;line-height:27px;background:#efefef;"><span style="color:#333333"><b class="k">皇家社会</b></span></div>
<div class="c" style="left:503px;top:524px;width:52px;height:25px;line-height:27px;background:#fffaf6;">1.08</div>
<div class="c" style="left:556px;top:524px;width:80px;height:25px;line-height:27px;background:#fffaf6;"><b class="k">平手</b></div>
<div class="c" style="left:637px;top:524px;width:53px;height:25px;line-height:27px;background:#fffaf6;">0.81</div>
<div class="c" style="left:691px;top:524px;width:66px;height:25px;line-height:27px;background:#f0f8fc;">3.14</div>
<div class="c" style="left:758px;top:524px;width:66px;height:25px;line-height:27px;background:#f0f8fc;">2.72</div>
<div class="c" style="left:825px;top:524px;width:68px;height:25px;line-height:27px;background:#f0f8fc;">2.72</div>
<div class="c" style="left:894px;top:524px;width:38px;height:25px;line-height:27px;background:#efefef;"><span style="color:#1a801a"><b class="k">平</b></span></div>
<div class="c" style="left:933px;top:524px;width:38px;height:25px;line-height:27px;background:#efefef;"><span style="color:#1a801a"><b class="k">走</b></span></div>
<div class="c" style="left:972px;top:524px;width:59px;height:25px;line-height:27px;background:#efefef;"><span style="color:#0000c8"><b class="k">小</b></span></div>
<div class="c" style="left:4px;top:549px;width:82px;height:27px;background:#b8d4c6"></div>
<div class="c" style="left:5px;top:550px;width:80px;height:25px;line-height:27px;background:#006633;color:#fff;-webkit-text-stroke:0.1px #fff"><b class="k">西甲</b></div>
<div class="c" style="left:86px;top:550px;width:77px;height:25px;line-height:27px;background:#ffffff;color:#333">24-08-25</div>
<div class="c" style="left:164px;top:550px;width:113px;height:25px;line-height:27px;background:#ffffff;"><span style="color:#1a801a"><b class="k">赫塔菲</b></span></div>
<div class="c" style="left:278px;top:550px;width:91px;height:25px;line-height:27px;background:#ffffff;"><span style="color:#c00012">0-0</span>(0-0)</div>
<div class="c" style="left:370px;top:550px;width:37px;height:25px;line-height:27px;background:#ffffff;">3-2</div>
<div class="c" style="left:408px;top:550px;width:94px;height:25px;line-height:27px;background:#ffffff;"><span style="color:#333333"><b class="k">巴列卡诺</b></span></div>
<div class="c" style="left:503px;top:550px;width:52px;height:25px;line-height:27px;background:#fffaf6;">0.74</div>
<div class="c" style="left:556px;top:550px;width:80px;height:25px;line-height:27px;background:#fffaf6;"><b class="k">平手</b></div>
<div class="c" style="left:637px;top:550px;width:53px;height:25px;line-height:27px;background:#fffaf6;">1.17</div>
<div class="c" style="left:691px;top:550px;width:66px;height:25px;line-height:27px;background:#f0f8fc;">2.59</div>
<div class="c" style="left:758px;top:550px;width:66px;height:25px;line-height:27px;background:#f0f8fc;">2.88</div>
<div class="c" style="left:825px;top:550px;width:68px;height:25px;line-height:27px;background:#f0f8fc;">3.12</div>
<div class="c" style="left:894px;top:550px;width:38px;height:25px;line-height:27px;background:#ffffff;"><span style="color:#1a801a"><b class="k">平</b></span></div>
<div class="c" style="left:933px;top:550px;width:38px;height:25px;line-height:27px;background:#ffffff;"><span style="color:#1a801a"><b class="k">走</b></span></div>
<div class="c" style="left:972px;top:550px;width:59px;height:25px;line-height:27px;background:#ffffff;"><span style="color:#0000c8"><b class="k">小</b></span></div>
<div class="c" style="left:4px;top:575px;width:82px;height:27px;background:#b8d4c6"></div>
<div class="c" style="left:5px;top:576px;width:80px;height:25px;line-height:27px;background:#006633;color:#fff;-webkit-text-stroke:0.1px #fff"><b class="k">西甲</b></div>
<div class="c" style="left:86px;top:576px;width:77px;height:25px;line-height:27px;background:#efefef;color:#333">24-08-16</div>
<div class="c" style="left:164px;top:576px;width:113px;height:25px;line-height:27px;background:#efefef;"><span style="color:#333333"><b class="k">毕尔巴鄂竞技</b></span></div>
<div class="c" style="left:278px;top:576px;width:91px;height:25px;line-height:27px;background:#efefef;"><span style="color:#c00012">1-1</span>(1-0)</div>
<div class="c" style="left:370px;top:576px;width:37px;height:25px;line-height:27px;background:#efefef;">5-6</div>
<div class="c" style="left:408px;top:576px;width:94px;height:25px;line-height:27px;background:#efefef;"><span style="color:#1a801a"><b class="k">赫塔菲</b></span></div>
<div class="c" style="left:503px;top:576px;width:52px;height:25px;line-height:27px;background:#fffaf6;">0.80</div>
<div class="c" style="left:556px;top:576px;width:80px;height:25px;line-height:27px;background:#fffaf6;"><b class="k">半</b>/<b class="k">一</b></div>
<div class="c" style="left:637px;top:576px;width:53px;height:25px;line-height:27px;background:#fffaf6;">1.09</div>
<div class="c" style="left:691px;top:576px;width:66px;height:25px;line-height:27px;background:#f0f8fc;">1.56</div>
<div class="c" style="left:758px;top:576px;width:66px;height:25px;line-height:27px;background:#f0f8fc;">3.68</div>
<div class="c" style="left:825px;top:576px;width:68px;height:25px;line-height:27px;background:#f0f8fc;">6.83</div>
<div class="c" style="left:894px;top:576px;width:38px;height:25px;line-height:27px;background:#efefef;"><span style="color:#1a801a"><b class="k">平</b></span></div>
<div class="c" style="left:933px;top:576px;width:38px;height:25px;line-height:27px;background:#efefef;"><span style="color:#c00012"><b class="k">赢</b></span></div>
<div class="c" style="left:972px;top:576px;width:59px;height:25px;line-height:27px;background:#efefef;"><span style="color:#1a801a"><b class="k">走</b></span></div>
<div class="c" style="left:4px;top:601px;width:82px;height:27px;background:#a8dcdc"></div>
<div class="c" style="left:5px;top:602px;width:80px;height:25px;line-height:27px;background:#00a6a6;color:#fff;-webkit-text-stroke:0.1px #fff"><b class="k">球会友谊</b></div>
<div class="c" style="left:86px;top:602px;width:77px;height:25px;line-height:27px;background:#ffffff;color:#333">24-08-10</div>
<div class="c" style="left:164px;top:602px;width:113px;height:25px;line-height:27px;background:#ffffff;"><span style="color:#333333"><b class="k">南安普敦</b></span></div>
<div class="c" style="left:278px;top:602px;width:91px;height:25px;line-height:27px;background:#ffffff;"><span style="color:#c00012">0-0</span>(0-0)</div>
<div class="c" style="left:370px;top:602px;width:37px;height:25px;line-height:27px;background:#ffffff;">4-2</div>
<div class="c" style="left:408px;top:602px;width:94px;height:25px;line-height:27px;background:#ffffff;"><span style="color:#1a801a"><b class="k">赫塔菲</b></span></div>
<div class="c" style="left:503px;top:602px;width:52px;height:25px;line-height:27px;background:#fffaf6;">1.02</div>
<div class="c" style="left:556px;top:602px;width:80px;height:25px;line-height:27px;background:#fffaf6;"><b class="k">半球</b></div>
<div class="c" style="left:637px;top:602px;width:53px;height:25px;line-height:27px;background:#fffaf6;">0.80</div>
<div class="c" style="left:691px;top:602px;width:66px;height:25px;line-height:27px;background:#f0f8fc;">2.01</div>
<div class="c" style="left:758px;top:602px;width:66px;height:25px;line-height:27px;background:#f0f8fc;">3.48</div>
<div class="c" style="left:825px;top:602px;width:68px;height:25px;line-height:27px;background:#f0f8fc;">3.24</div>
<div class="c" style="left:894px;top:602px;width:38px;height:25px;line-height:27px;background:#ffffff;"><span style="color:#1a801a"><b class="k">平</b></span></div>
<div class="c" style="left:933px;top:602px;width:38px;height:25px;line-height:27px;background:#ffffff;"><span style="color:#c00012"><b class="k">赢</b></span></div>
<div class="c" style="left:972px;top:602px;width:59px;height:25px;line-height:27px;background:#ffffff;"><span style="color:#0000c8"><b class="k">小</b></span></div>
<div class="c" style="left:4px;top:627px;width:82px;height:27px;background:#a8dcdc"></div>
<div class="c" style="left:5px;top:628px;width:80px;height:25px;line-height:27px;background:#00a6a6;color:#fff;-webkit-text-stroke:0.1px #fff"><b class="k">球会友谊</b></div>
<div class="c" style="left:86px;top:628px;width:77px;height:25px;line-height:27px;background:#efefef;color:#333">24-08-08</div>
<div class="c" style="left:164px;top:628px;width:113px;height:25px;line-height:27px;background:#efefef;"><span style="color:#1a801a"><b class="k">赫塔菲</b></span></div>
<div class="c" style="left:278px;top:628px;width:91px;height:25px;line-height:27px;background:#efefef;"><span style="color:#c00012">1-0</span>(1-0)</div>
<div class="c" style="left:370px;top:628px;width:37px;height:25px;line-height:27px;background:#efefef;">4-6</div>
<div class="c" style="left:408px;top:628px;width:94px;height:25px;line-height:27px;background:#efefef;"><span style="color:#333333"><b class="k">圣埃蒂安</b></span></div>
<div class="c" style="left:503px;top:628px;width:52px;height:25px;line-height:27px;background:#fffaf6;">0.88</div>
<div class="c" style="left:556px;top:628px;width:80px;height:25px;line-height:27px;background:#fffaf6;"><b class="k">平</b>/<b class="k">半</b></div>
<div class="c" style="left:637px;top:628px;width:53px;height:25px;line-height:27px;background:#fffaf6;">0.94</div>
<div class="c" style="left:691px;top:628px;width:66px;height:25px;line-height:27px;background:#f0f8fc;">2.21</div>
<div class="c" style="left:758px;top:628px;width:66px;height:25px;line-height:27px;background:#f0f8fc;">3.35</div>
<div class="c" style="left:825px;top:628px;width:68px;height:25px;line-height:27px;background:#f0f8fc;">2.91</div>
<div class="c" style="left:894px;top:628px;width:38px;height:25px;line-height:27px;background:#efefef;"><span style="color:#c00012"><b class="k">胜</b></span></div>
<div class="c" style="left:933px;top:628px;width:38px;height:25px;line-height:27px;background:#efefef;"><span style="color:#c00012"><b class="k">赢</b></span></div>
<div class="c" style="left:972px;top:628px;width:59px;height:25px;line-height:27px;background:#efefef;"><span style="color:#0000c8"><b class="k">小</b></span></div>
<div class="c" style="left:4px;top:653px;width:82px;height:27px;background:#a8dcdc"></div>
<div class="c" style="left:5px;top:654px;width:80px;height:25px;line-height:27px;background:#00a6a6;color:#fff;-webkit-text-stroke:0.1px #fff"><b class="k">球会友谊</b></div>
<div class="c" style="left:86px;top:654px;width:77px;height:25px;line-height:27px;background:#ffffff;color:#333">24-08-04</div>
<div class="c" style="left:164px;top:654px;width:113px;height:25px;line-height:27px;background:#ffffff;"><span style="color:#1a801a"><span class="rc">1</span><b class="k">赫塔菲</b></span></div>
<div class="c" style="left:278px;top:654px;width:91px;height:25px;line-height:27px;background:#ffffff;"><span style="color:#c00012">1-3</span>(0-2)</div>
<div class="c" style="left:370px;top:654px;width:37px;height:25px;line-height:27px;background:#ffffff;">3-1</div>
<div class="c" style="left:408px;top:654px;width:94px;height:25px;line-height:27px;background:#ffffff;"><span style="color:#333333"><b class="k">马德里竞技</b></span></div>
<div class="c" style="left:503px;top:654px;width:52px;height:25px;line-height:27px;background:#fffaf6;">0.97</div>
<div class="c" style="left:556px;top:654px;width:80px;height:25px;line-height:27px;background:#fffaf6;"><b class="k">受半球</b></div>
<div class="c" style="left:637px;top:654px;width:53px;height:25px;line-height:27px;background:#fffaf6;">0.85</div>
<div class="c" style="left:691px;top:654px;width:66px;height:25px;line-height:27px;background:#f0f8fc;">3.87</div>
<div class="c" style="left:758px;top:654px;width:66px;height:25px;line-height:27px;background:#f0f8fc;">3.44</div>
<div class="c" style="left:825px;top:654px;width:68px;height:25px;line-height:27px;background:#f0f8fc;">1.83</div>
<div class="c" style="left:894px;top:654px;width:38px;height:25px;line-height:27px;background:#ffffff;"><span style="color:#0000c8"><b class="k">负</b></span></div>
<div class="c" style="left:933px;top:654px;width:38px;height:25px;line-height:27px;background:#ffffff;"><span style="color:#0000c8"><b class="k">输</b></span></div>
<div class="c" style="left:972px;top:654px;width:59px;height:25px;line-height:27px;background:#ffffff;"><span style="color:#c00012"><b class="k">大</b></span></div>
<div class="c" style="left:4px;top:679px;width:82px;height:27px;background:#a8dcdc"></div>
<div class="c" style="left:5px;top:680px;width:80px;height:25px;line-height:27px;background:#00a6a6;color:#fff;-webkit-text-stroke:0.1px #fff"><b class="k">球会友谊</b></div>
<div class="c" style="left:86px;top:680px;width:77px;height:25px;line-height:27px;background:#efefef;color:#333">24-08-01</div>
<div class="c" style="left:164px;top:680px;width:113px;height:25px;line-height:27px;background:#efefef;"><span style="color:#1a801a"><b class="k">赫塔菲</b>(<b class="k">中</b>)</span></div>
<div class="c" style="left:278px;top:680px;width:91px;height:25px;line-height:27px;background:#efefef;"><span style="color:#c00012">0-1</span>(0-1)</div>
<div class="c" style="left:370px;top:680px;width:37px;height:25px;line-height:27px;background:#efefef;">3-4</div>
<div class="c" style="left:408px;top:680px;width:94px;height:25px;line-height:27px;background:#efefef;"><span style="color:#333333"><b class="k">萨拉戈萨</b></span></div>
<div class="c" style="left:503px;top:680px;width:52px;height:25px;line-height:27px;background:#fffaf6;">0.91</div>
<div class="c" style="left:556px;top:680px;width:80px;height:25px;line-height:27px;background:#fffaf6;"><b class="k">平</b>/<b class="k">半</b></div>
<div class="c" style="left:637px;top:680px;width:53px;height:25px;line-height:27px;background:#fffaf6;">0.91</div>
<div class="c" style="left:691px;top:680px;width:66px;height:25px;line-height:27px;background:#f0f8fc;">2.09</div>
<div class="c" style="left:758px;top:680px;width:66px;height:25px;line-height:27px;background:#f0f8fc;">2.96</div>
<div class="c" style="left:825px;top:680px;width:68px;height:25px;line-height:27px;background:#f0f8fc;">3.61</div>
<div class="c" style="left:894px;top:680px;width:38px;height:25px;line-height:27px;background:#efefef;"><span style="color:#0000c8"><b class="k">负</b></span></div>
<div class="c" style="left:933px;top:680px;width:38px;height:25px;line-height:27px;background:#efefef;"><span style="color:#0000c8"><b class="k">输</b></span></div>
<div class="c" style="left:972px;top:680px;width:59px;height:25px;line-height:27px;background:#efefef;"><span style="color:#0000c8"><b class="k">小</b></span></div>
<div class="c" style="left:5px;top:706px;width:1026px;height:25px;line-height:27px;background:#fff;letter-spacing:0.22px"><b class="k">近</b><span style="color:#c00012">10</span><b class="k">场</b>,<b class="k">胜</b>1<b class="k">平</b>5<b class="k">负</b>4, <b class="k">胜率</b>:<span style="color:#c00012">10%</span> <b class="k">让胜率</b>:<span style="color:#c00012">30%</span> <b class="k">大率</b>:<span style="color:#c00012">30%</span> <b class="k">单率</b>:<span style="color:#c00012">40%</span></div>
<div class="sel" style="left:546px;top:56px;width:60px;"><span class="st">Crow*</span><svg class="chev" width="10" height="6" viewBox="0 0 10 6"><path d="M1 0.8 L5 4.8 L9 0.8" fill="none" stroke="#000" stroke-width="2"/></svg></div>
<div class="sel" style="left:615px;top:56px;width:50px;"><span class="st">終指</span><svg class="chev" width="10" height="6" viewBox="0 0 10 6"><path d="M1 0.8 L5 4.8 L9 0.8" fill="none" stroke="#000" stroke-width="2"/></svg></div>
<div class="sel" style="left:733px;top:56px;width:69px;"><span class="st">平均值</span><svg class="chev" width="10" height="6" viewBox="0 0 10 6"><path d="M1 0.8 L5 4.8 L9 0.8" fill="none" stroke="#000" stroke-width="2"/></svg></div>
<div class="sel" style="left:811px;top:56px;width:50px;"><span class="st">終指</span><svg class="chev" width="10" height="6" viewBox="0 0 10 6"><path d="M1 0.8 L5 4.8 L9 0.8" fill="none" stroke="#000" stroke-width="2"/></svg></div>
<div class="sel" style="left:938px;top:56px;width:51px;"><span class="st">全场</span><svg class="chev" width="10" height="6" viewBox="0 0 10 6"><path d="M1 0.8 L5 4.8 L9 0.8" fill="none" stroke="#000" stroke-width="2"/></svg></div>
<div class="sel" style="left:537px;top:407px;width:60px;"><span class="st">Crow*</span><svg class="chev" width="10" height="6" viewBox="0 0 10 6"><path d="M1 0.8 L5 4.8 L9 0.8" fill="none" stroke="#000" stroke-width="2"/></svg></div>
<div class="sel" style="left:606px;top:407px;width:50px;"><span class="st">終指</span><svg class="chev" width="10" height="6" viewBox="0 0 10 6"><path d="M1 0.8 L5 4.8 L9 0.8" fill="none" stroke="#000" stroke-width="2"/></svg></div>
<div class="sel" style="left:728px;top:407px;width:69px;"><span class="st">平均值</span><svg class="chev" width="10" height="6" viewBox="0 0 10 6"><path d="M1 0.8 L5 4.8 L9 0.8" fill="none" stroke="#000" stroke-width="2"/></svg></div>
<div class="sel" style="left:806px;top:407px;width:50px;"><span class="st">終指</span><svg class="chev" width="10" height="6" viewBox="0 0 10 6"><path d="M1 0.8 L5 4.8 L9 0.8" fill="none" stroke="#000" stroke-width="2"/></svg></div>
<div class="sel" style="left:938px;top:407px;width:50px;"><span class="st">全场</span><svg class="chev" width="10" height="6" viewBox="0 0 10 6"><path d="M1 0.8 L5 4.8 L9 0.8" fill="none" stroke="#000" stroke-width="2"/></svg></div>
<div class="ft" style="left:421px;top:38px;">近</div>
<div class="fsel" style="left:437px;top:36px;width:38px;height:17px"><span class="fst">10</span><svg class="chev" style="right:4px;top:5px" width="10" height="6" viewBox="0 0 10 6"><path d="M1 0.8 L5 4.8 L9 0.8" fill="none" stroke="#000" stroke-width="2"/></svg></div>
<div class="ft" style="left:479px;top:38px;">场</div>
<div class="ck" style="left:495px;top:36px"></div>
<div class="ft" style="left:511px;top:38px;">同主</div>
<div class="ck on" style="left:535px;top:36px"><svg width="13" height="13" viewBox="0 0 13 13"><path d="M2.8 6.4 L5.3 8.9 L10.3 3.6" fill="none" stroke="#fff" stroke-width="2"/></svg></div>
<div class="ft" style="left:548px;top:38px;">西甲</div>
<div class="ck on" style="left:572px;top:36px"><svg width="13" height="13" viewBox="0 0 13 13"><path d="M2.8 6.4 L5.3 8.9 L10.3 3.6" fill="none" stroke="#fff" stroke-width="2"/></svg></div>
<div class="ft" style="left:585px;top:38px;">欧冠杯</div>
<div class="ck on" style="left:621px;top:36px"><svg width="13" height="13" viewBox="0 0 13 13"><path d="M2.8 6.4 L5.3 8.9 L10.3 3.6" fill="none" stroke="#fff" stroke-width="2"/></svg></div>
<div class="ft" style="left:634px;top:38px;">球会友谊</div>
<div class="ft" style="left:438px;top:389px;">近</div>
<div class="fsel" style="left:453px;top:387px;width:38px;height:17px"><span class="fst">10</span><svg class="chev" style="right:4px;top:5px" width="10" height="6" viewBox="0 0 10 6"><path d="M1 0.8 L5 4.8 L9 0.8" fill="none" stroke="#000" stroke-width="2"/></svg></div>
<div class="ft" style="left:495px;top:389px;">场</div>
<div class="ck" style="left:511px;top:387px"></div>
<div class="ft" style="left:529px;top:389px;">同客</div>
<div class="ck on" style="left:556px;top:387px"><svg width="13" height="13" viewBox="0 0 13 13"><path d="M2.8 6.4 L5.3 8.9 L10.3 3.6" fill="none" stroke="#fff" stroke-width="2"/></svg></div>
<div class="ft" style="left:569px;top:389px;">西甲</div>
<div class="ck on" style="left:593px;top:387px"><svg width="13" height="13" viewBox="0 0 13 13"><path d="M2.8 6.4 L5.3 8.9 L10.3 3.6" fill="none" stroke="#fff" stroke-width="2"/></svg></div>
<div class="ft" style="left:606px;top:389px;">球会友谊</div>
</body></html>
